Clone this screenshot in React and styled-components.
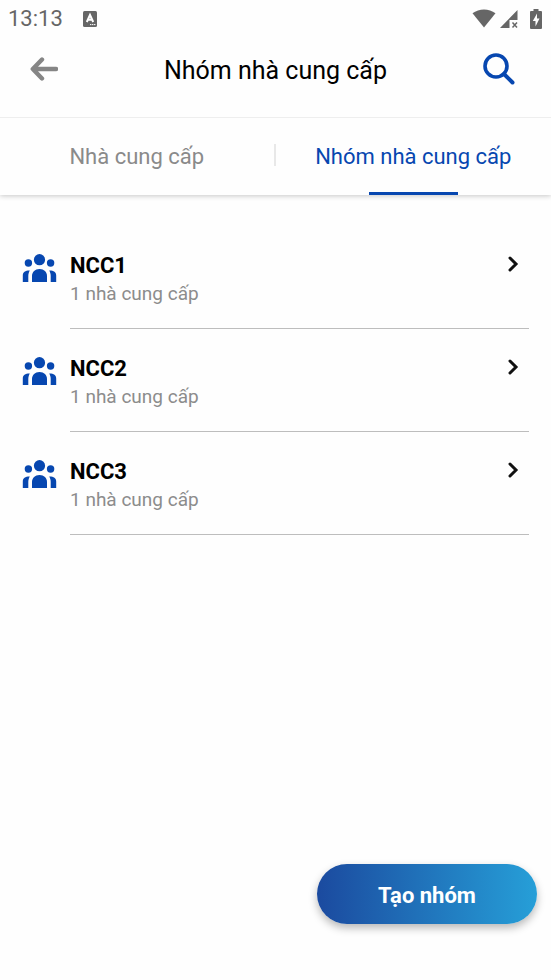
import React from "react";
import styled, { createGlobalStyle } from "styled-components";

const GlobalStyle = createGlobalStyle`
  *, *::before, *::after { box-sizing: border-box; }
  body {
    margin: 0;
    background: #fefefe;
    color: #000;
    font-family: Roboto, "Noto Sans", sans-serif;
  }
  button { font: inherit; color: inherit; border: 0; padding: 0; background: none; cursor: pointer; }
  svg { display: block; }
`;

const Screen = styled.div`
  display: flex;
  flex-direction: column;
  min-height: 100vh;
`;

const StatusBar = styled.div`
  display: flex;
  align-items: center;
  height: 38px;
  padding: 0 9px 0 8px;
  color: #666;
`;

const Clock = styled.time`
  margin-right: 20px;
  font-size: 22px;
  line-height: 38px;
`;

const StatusIcons = styled.div`
  display: flex;
  align-items: center;
  gap: 4px;
  margin-left: auto;
`;

const BatterySlot = styled.span`
  padding-left: 8px;
`;

const Header = styled.header`
  display: grid;
  grid-template-columns: 36px 1fr 36px;
  align-items: center;
  height: 80px;
  padding: 0 34px 18px 26px;
  border-bottom: 1px solid #eee;
`;

const Title = styled.h1`
  margin: 0;
  padding: 4px 0 0 8px;
  font-size: 25px;
  font-weight: 400;
  line-height: 32px;
  text-align: center;
`;

const IconButton = styled.button`
  display: flex;
  align-items: center;
  justify-content: center;
  height: 36px;
`;

const Tabs = styled.nav`
  display: grid;
  grid-template-columns: 1fr 1fr;
  height: 77px;
  box-shadow: 0 1px 5px rgba(0, 0, 0, 0.22);
  clip-path: inset(0 0 -10px 0);
`;

const TabCell = styled.div`
  display: flex;
  align-items: stretch;
`;

const TabDivider = styled.span`
  width: 2px;
  height: 22px;
  margin-top: 26px;
  background: #e8e8e8;
`;

const Tab = styled.button`
  display: flex;
  flex: 1 1 0;
  flex-direction: column;
  align-items: center;
  justify-content: space-between;
  padding-top: 24px;
  font-size: 22px;
  line-height: 30px;
  color: ${({ $active }) => ($active ? "#0747b0" : "#8a8a8a")};

  &::after {
    content: "";
    width: 89px;
    height: 3px;
    background: ${({ $active }) => ($active ? "#0747b0" : "transparent")};
  }
`;

const GroupList = styled.ul`
  margin: 0;
  padding: 31px 22px 0;
  list-style: none;
`;

const GroupRow = styled.button`
  display: grid;
  grid-template-columns: 48px 1fr;
  width: 100%;
  text-align: left;
`;

const GroupIcon = styled.span`
  padding-top: 28px;
`;

const GroupBody = styled.span`
  display: flex;
  align-items: flex-start;
  justify-content: space-between;
  height: 103px;
  padding: 26px 9px 0 0;
  border-bottom: 1px solid #bdbdbd;
`;

const GroupText = styled.span`
  display: flex;
  flex-direction: column;
`;

const GroupName = styled.span`
  font-size: 22px;
  font-weight: 700;
  line-height: 28px;
`;

const GroupCount = styled.span`
  font-size: 19px;
  line-height: 28px;
  color: #8c8c8c;
`;

const Chevron = styled.span`
  padding-top: 3px;
`;

const Footer = styled.footer`
  display: flex;
  justify-content: flex-end;
  margin-top: auto;
  padding: 24px 14px 56px;
`;

const CreateButton = styled.button`
  min-width: 220px;
  height: 60px;
  padding: 2px 32px 0;
  border-radius: 30px;
  background: linear-gradient(90deg, #1b4a9f, #269fd8);
  box-shadow: 0 4px 8px rgba(0, 0, 0, 0.28);
  color: #fff;
  font-size: 22px;
  font-weight: 700;
`;

const KeyboardIcon = () => (
  <svg width="14" height="16" viewBox="0 0 14 16" aria-hidden="true">
    <rect width="14" height="16" rx="1.5" fill="#666" />
    <path d="M3.8 11 7 4l3.2 7M5 8.8h4" fill="none" stroke="#fff" strokeWidth="2" />
    <path d="M7 13.6h6" stroke="#fff" strokeWidth="1" strokeDasharray="1.4 .6" />
  </svg>
);

const WifiIcon = () => (
  <svg width="24" height="20" viewBox="0 0 24 20" aria-hidden="true">
    <path d="M.5 4.3C7-.8 17-.8 23.500 4.300L12 18.500Z" fill="#666" />
  </svg>
);

const SignalIcon = () => (
  <svg width="18" height="19" viewBox="0 0 18 19" aria-hidden="true">
    <path d="M17.500 0V10H9.500V18H0Z" fill="#666" />
    <path d="m12.500 12.500 4.500 5m0-5-4.500 5" stroke="#666" strokeWidth="1.500" />
  </svg>
);

const BatteryIcon = () => (
  <svg width="12" height="20" viewBox="0 0 12 20" aria-hidden="true">
    <path d="M3.500 0h5v2H11q1 0 1 1v16q0 1-1 1H1q-1 0-1-1V3q0-1 1-1h2.500Z" fill="#666" />
    <path d="M7 4.500 2.800 12h2.700v5.500L9.500 9.500H7Z" fill="#fff" />
  </svg>
);

const BackIcon = () => (
  <svg width="28" height="24" viewBox="0 0 28 24" fill="none" stroke="#858585" strokeWidth="4.400" strokeLinecap="round" strokeLinejoin="round" aria-hidden="true">
    <path d="M12 2.500 2.800 12 12 21.500M3 12h23" />
  </svg>
);

const SearchIcon = () => (
  <svg width="32" height="32" viewBox="0 0 32 32" fill="none" stroke="#0747b0" strokeLinecap="round" aria-hidden="true">
    <circle cx="13" cy="13" r="11" strokeWidth="3.600" />
    <path d="m21 21 8.500 8.500" strokeWidth="4" />
  </svg>
);

const PeopleIcon = () => (
  <svg width="35" height="28" viewBox="0 0 35 28" fill="#0747b0" aria-hidden="true">
    <circle cx="17.500" cy="5.700" r="5.600" />
    <circle cx="6.400" cy="9" r="3.700" />
    <circle cx="28.600" cy="9" r="3.700" />
    <path d="M10 28V22c0-4 3-7 7.500-7s7.500 3 7.500 7v6Z" />
    <path d="M.8 28V21.500c0-3.300 2.500-5 7-4.900C6.800 18.500 6.300 20 6.300 22v6Z" />
    <path d="M34.200 28V21.500c0-3.300-2.500-5-7-4.900 1 1.900 1.500 3.400 1.500 5.400v6Z" />
  </svg>
);

const ChevronIcon = () => (
  <svg width="14" height="18" viewBox="0 0 14 18" fill="none" stroke="#111" strokeWidth="3" strokeLinecap="round" aria-hidden="true">
    <path d="m4 3 6 6-6 6" />
  </svg>
);

const groups = [
  { name: "NCC1", count: 1 },
  { name: "NCC2", count: 1 },
  { name: "NCC3", count: 1 },
];

export default function App() {
  return (
    <Screen>
      <GlobalStyle />
      <StatusBar>
        <Clock>13:13</Clock>
        <KeyboardIcon />
        <StatusIcons>
          <WifiIcon />
          <SignalIcon />
          <BatterySlot><BatteryIcon /></BatterySlot>
        </StatusIcons>
      </StatusBar>
      <Header>
        <IconButton aria-label="Quay lại"><BackIcon /></IconButton>
        <Title>Nhóm nhà cung cấp</Title>
        <IconButton aria-label="Tìm kiếm"><SearchIcon /></IconButton>
      </Header>
      <Tabs>
        <TabCell>
          <Tab>Nhà cung cấp</Tab>
          <TabDivider />
        </TabCell>
        <TabCell>
          <Tab $active aria-current="page">Nhóm nhà cung cấp</Tab>
        </TabCell>
      </Tabs>
      <main>
        <GroupList>
          {groups.map((group) => (
            <li key={group.name}>
              <GroupRow>
                <GroupIcon><PeopleIcon /></GroupIcon>
                <GroupBody>
                  <GroupText>
                    <GroupName>{group.name}</GroupName>
                    <GroupCount>{group.count} nhà cung cấp</GroupCount>
                  </GroupText>
                  <Chevron><ChevronIcon /></Chevron>
                </GroupBody>
              </GroupRow>
            </li>
          ))}
        </GroupList>
      </main>
      <Footer>
        <CreateButton>Tạo nhóm</CreateButton>
      </Footer>
    </Screen>
  );
}
